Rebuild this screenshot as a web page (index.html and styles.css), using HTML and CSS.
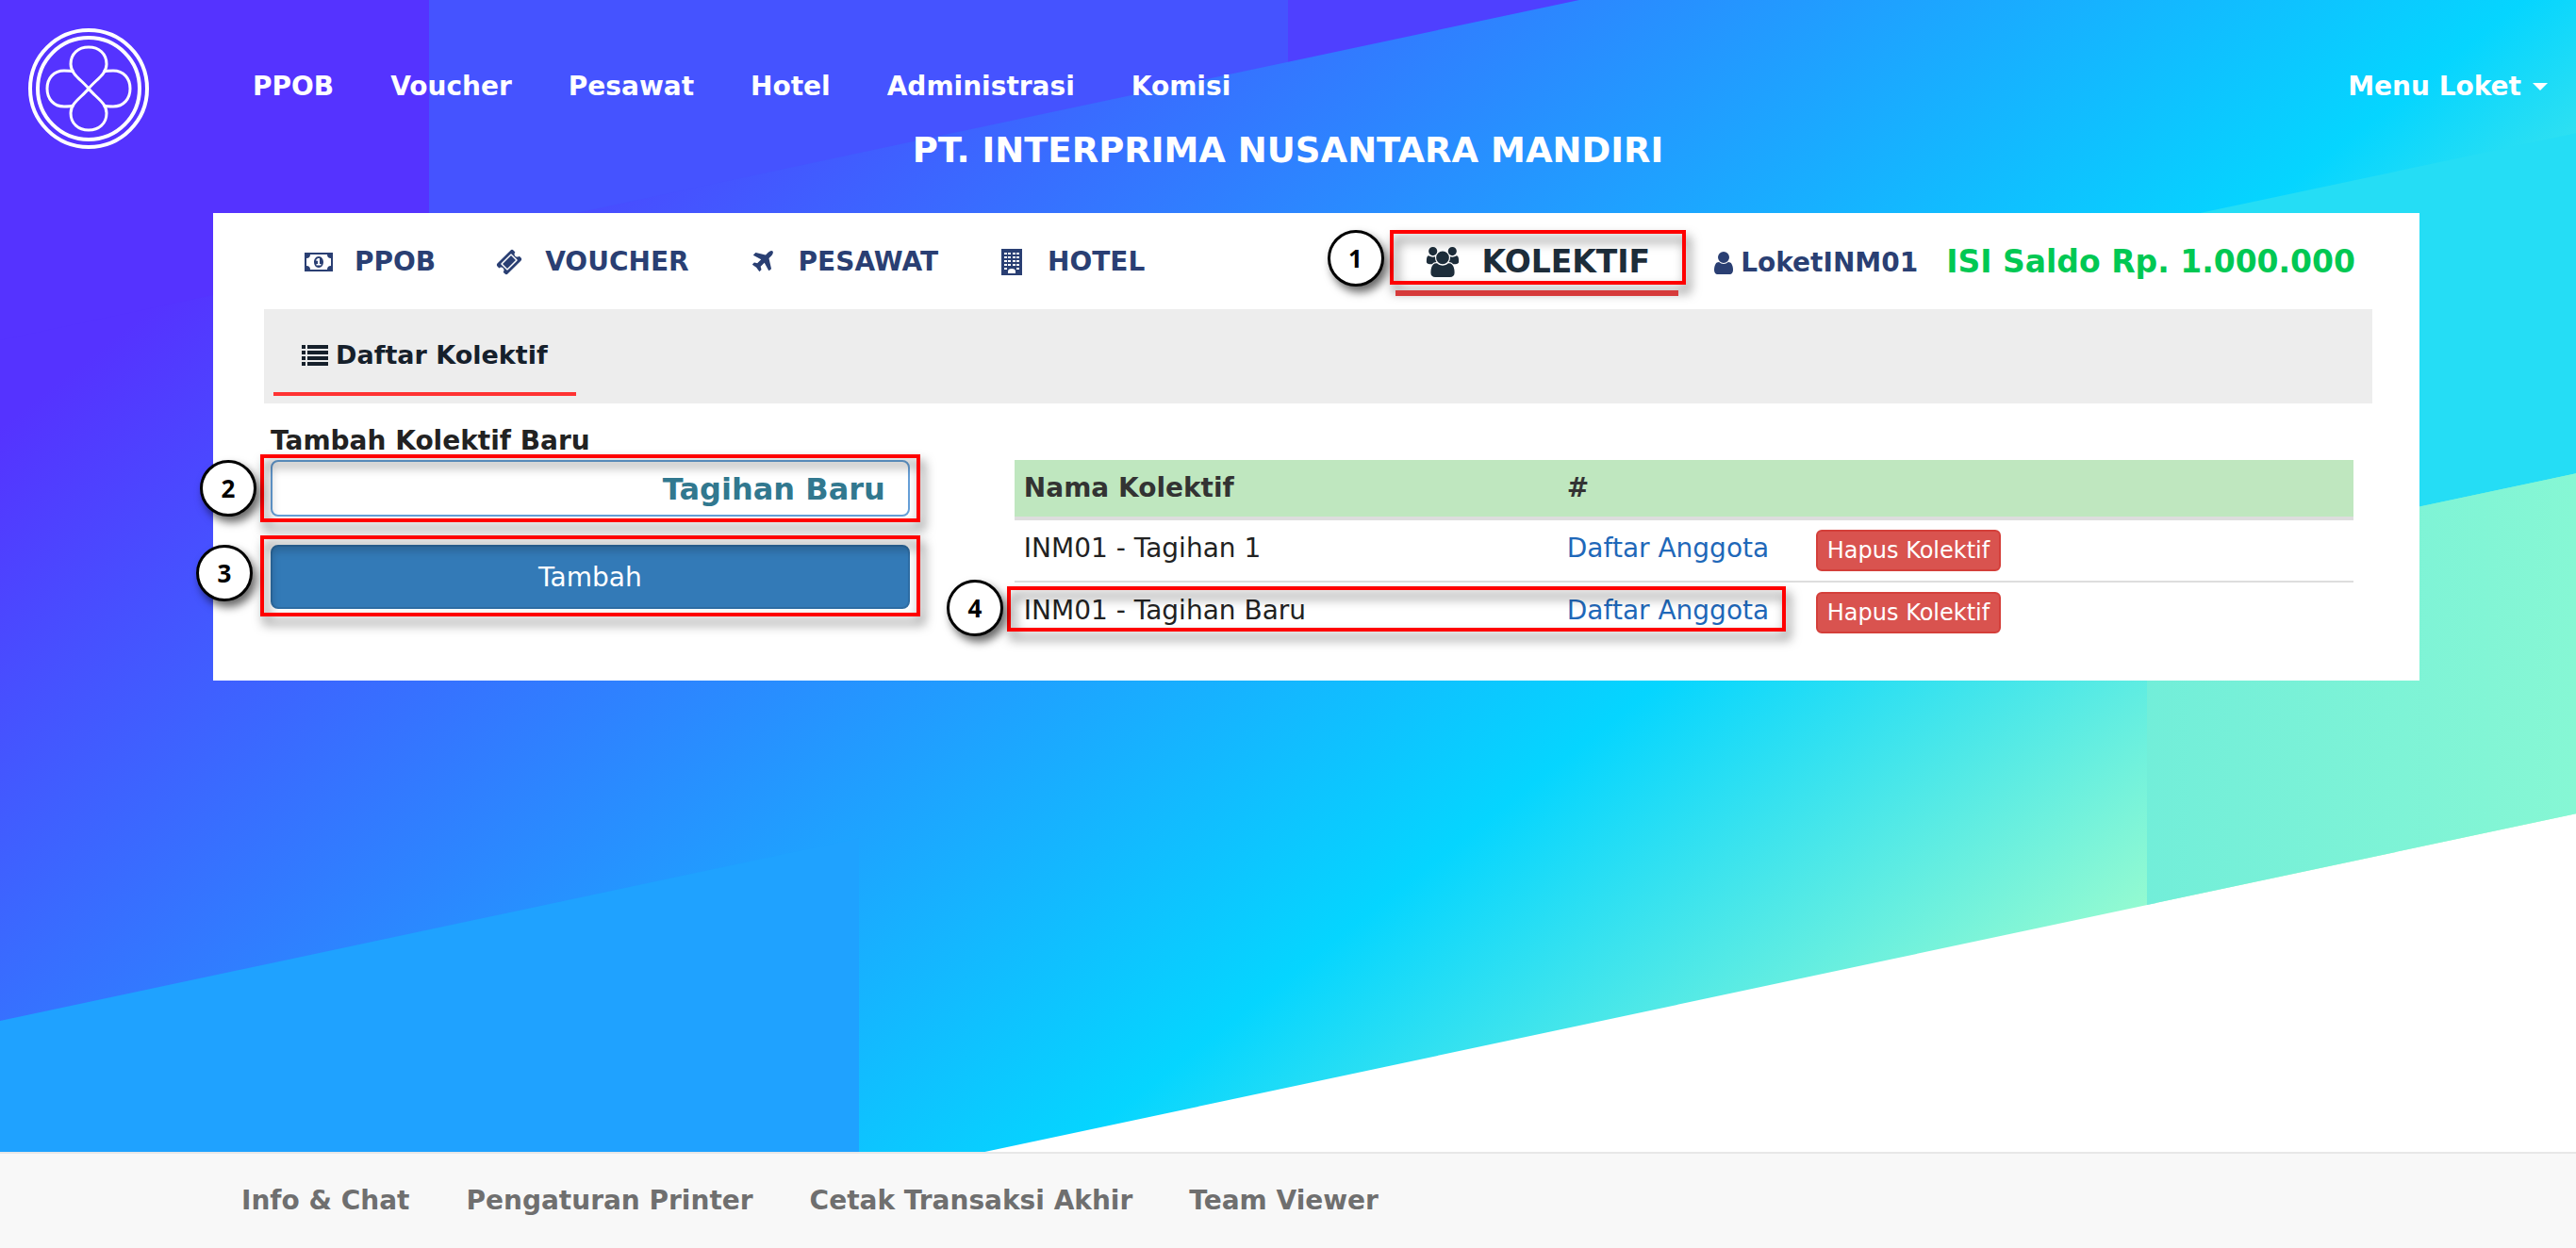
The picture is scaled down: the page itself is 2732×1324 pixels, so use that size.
FILE: index.html
```html
<!DOCTYPE html>
<html lang="id">
<head>
<meta charset="utf-8">
<title>Kolektif - PT. Interprima Nusantara Mandiri</title>
<link rel="stylesheet" href="styles.css">
</head>
<body>
<div class="hero">
  <div class="backdrop" aria-hidden="true">
    <div class="stripes">
      <span class="stripe stripe-violet"></span>
      <span class="stripe stripe-indigo"></span>
      <span class="stripe stripe-purple"></span>
      <span class="stripe stripe-cyan"></span>
      <span class="stripe stripe-blue"></span>
      <span class="stripe stripe-mint"></span>
    </div>
  </div>

  <header class="header">
    <a class="brand" href="#" aria-label="Beranda">
      <svg viewBox="-64 -64 128 128" fill="none" stroke="#fff">
        <circle r="62" stroke-width="4"/>
        <circle r="54" stroke-width="4"/>
        <g stroke-width="3">
          <path d="M0 0C-7-9-19-15-19-26C-19-37-11-44 0-44C11-44 19-37 19-26C19-15 7-9 0 0"/>
          <path d="M0 0C-7-9-19-15-19-26C-19-37-11-44 0-44C11-44 19-37 19-26C19-15 7-9 0 0" transform="rotate(180)"/>
          <path d="M-16-18C-19-19-22-19-26-19C-37-19-44-11-44 0C-44 11-37 19-26 19C-22 19-19 19-16 18"/>
          <path d="M16-18C19-19 22-19 26-19C37-19 44-11 44 0C44 11 37 19 26 19C22 19 19 19 16 18"/>
        </g>
      </svg>
    </a>
    <nav class="main-nav">
      <a href="#">PPOB</a>
      <a href="#">Voucher</a>
      <a href="#">Pesawat</a>
      <a href="#">Hotel</a>
      <a href="#">Administrasi</a>
      <a href="#">Komisi</a>
    </nav>
    <button class="user-menu" type="button">Menu Loket <span class="caret"></span></button>
    <h1 class="company">PT. INTERPRIMA NUSANTARA MANDIRI</h1>
  </header>

  <main class="panel">
    <nav class="tabs">
      <a class="tab" href="#">
        <svg class="icon icon-money" viewBox="0 0 30 20"><path fill-rule="evenodd" d="M0 0H30V20H0ZM6 2A4 4 0 0 1 2 6V14A4 4 0 0 1 6 18H24A4 4 0 0 1 28 14V6A4 4 0 0 1 24 2ZM15 4C18 4 20 7 20 10S18 16 15 16S10 13 10 10S12 4 15 4ZM14 6L12 8L13 9L14 8.500V12H12.500V13.500H17.500V12H16V6Z"/></svg>
        PPOB</a>
      <a class="tab" href="#">
        <svg class="icon" viewBox="0 0 1792 1792"><path d="M1024 452l316 316-572 572-316-316zm-211 979l618-618q19-19 19-45t-19-45l-362-362q-18-18-45-18t-45 18l-618 618q-19 19-19 45t19 45l362 362q18 18 45 18t45-18zm889-637l-907 908q-37 37-90.500 37t-90.500-37l-126-126q56-56 56-136t-56-136-136-56-136 56l-125-126q-37-37-37-90.500t37-90.500l907-906q37-37 90.500-37t90.500 37l125 125q-56 56-56 136t56 136 136 56 136-56l126 125q37 37 37 90.500t-37 90.500z"/></svg>
        VOUCHER</a>
      <a class="tab" href="#">
        <svg class="icon" viewBox="0 0 1792 1792"><path d="M1568 160q44 52 12 148t-108 172l-161 161 160 696q5 19-12 33l-128 96q-7 6-19 6-4 0-7-1-15-3-21-16l-279-508-259 259 53 194q5 17-8 31l-96 96q-9 9-23 9h-2q-15-2-24-13l-189-252-252-189q-11-7-13-23-1-13 9-25l96-97q9-9 23-9 6 0 8 1l194 53 259-259-508-279q-14-8-17-24-2-16 9-27l128-128q14-13 30-8l665 159 160-160q76-76 172-108t148 12z"/></svg>
        PESAWAT</a>
      <a class="tab" href="#">
        <svg class="icon" viewBox="0 0 22 28"><path fill-rule="evenodd" d="M0 0H22V28H0ZM3 4V6H6V4ZM7 4V6H10V4ZM12 4V6H15V4ZM16 4V6H19V4ZM3 8V10H6V8ZM7 8V10H10V8ZM12 8V10H15V8ZM16 8V10H19V8ZM3 12V14H6V12ZM7 12V14H10V12ZM12 12V14H15V12ZM16 12V14H19V12ZM3 16V18H6V16ZM7 16V18H10V16ZM12 16V18H15V16ZM16 16V18H19V16ZM3 20V22H6V20ZM16 20V22H19V20ZM7 26V24A4 3 0 0 1 15 24V26Z"/></svg>
        HOTEL</a>
      <a class="tab tab-active" href="#">
        <svg class="icon icon-group" viewBox="0 0 1920 1792"><path d="M593 896q-162 5-265 128h-134q-82 0-138-40.500t-56-118.500q0-353 124-353 6 0 43.500 21t97.500 42.500 119 21.500q67 0 133-23-5 37-5 66 0 139 81 256zm1071 637q0 120-73 189.500t-194 69.500h-874q-121 0-194-69.500t-73-189.500q0-53 3.500-103.500t14-109 26.500-108.500 43-97.500 62-81 85.500-53.500 111.500-20q10 0 43 21.500t73 48 107 48 135 21.500 135-21.500 107-48 73-48 43-21.500q61 0 111.500 20t85.500 53.500 62 81 43 97.500 26.500 108.500 14 109 3.500 103.500zm-1024-1277q0 106-75 181t-181 75-181-75-75-181 75-181 181-75 181 75 75 181zm704 384q0 159-112.500 271.500t-271.500 112.500-271.500-112.500-112.500-271.500 112.500-271.500 271.500-112.500 271.500 112.500 112.500 271.500zm576 225q0 78-56 118.500t-138 40.500h-134q-103-123-265-128 81-117 81-256 0-29-5-66 66 23 133 23 59 0 119-21.500t97.500-42.500 43.500-21q124 0 124 353zm-128-609q0 106-75 181t-181 75-181-75-75-181 75-181 181-75 181 75 75 181z"/></svg>
        KOLEKTIF
        <span class="frame frame-tab"></span>
        <span class="marker marker-tab">1</span>
      </a>
      <a class="account" href="#">
        <svg class="icon-user" viewBox="256 128 1280 1536"><path d="M1536 1399q0 109-62.500 187t-150.500 78h-854q-88 0-150.500-78t-62.500-187q0-85 8.500-160.500t31.500-152 58.500-131 94-89 134.500-34.500q131 128 313 128t313-128q76 0 134.500 34.500t94 89 58.500 131 31.500 152 8.500 160.500zm-256-887q0 159-112.500 271.500t-271.500 112.500-271.500-112.500-112.500-271.500 112.500-271.500 271.500-112.500 271.500 112.500 112.500 271.500z"/></svg>
        LoketINM01</a>
      <a class="balance" href="#">ISI Saldo Rp. 1.000.000</a>
    </nav>

    <nav class="subnav">
      <a class="subtab" href="#">
        <svg class="icon-list" viewBox="0 0 28 22"><path d="M0 0H4V4H0ZM6 0H28V4H6ZM0 6H4V10H0ZM6 6H28V10H6ZM0 12H4V16H0ZM6 12H28V16H6ZM0 18H4V22H0ZM6 18H28V22H6Z"/></svg>
        Daftar Kolektif</a>
    </nav>

    <div class="content">
      <form class="create">
        <label class="create-label" for="nama">Tambah Kolektif Baru</label>
        <div class="field">
          <input class="create-input" id="nama" type="text" value="Tagihan Baru">
          <span class="frame frame-input"></span>
          <span class="marker marker-input">2</span>
        </div>
        <div class="field">
          <button class="create-button" type="button">Tambah</button>
          <span class="frame frame-button"></span>
          <span class="marker marker-button">3</span>
        </div>
      </form>

      <div class="listing">
        <table class="table">
          <thead>
            <tr><th class="col-name">Nama Kolektif</th><th class="col-members">#</th><th></th></tr>
          </thead>
          <tbody>
            <tr>
              <td>INM01 - Tagihan 1</td>
              <td><a href="#">Daftar Anggota</a></td>
              <td><button class="delete" type="button">Hapus Kolektif</button></td>
            </tr>
            <tr>
              <td>INM01 - Tagihan Baru</td>
              <td><a href="#">Daftar Anggota</a></td>
              <td><button class="delete" type="button">Hapus Kolektif</button></td>
            </tr>
          </tbody>
        </table>
        <span class="frame frame-row"></span>
        <span class="marker marker-row">4</span>
      </div>
    </div>
  </main>
</div>

<footer class="footer">
  <a href="#">Info &amp; Chat</a>
  <a href="#">Pengaturan Printer</a>
  <a href="#">Cetak Transaksi Akhir</a>
  <a href="#">Team Viewer</a>
</footer>
</body>
</html>
```
FILE: styles.css
```css
* { box-sizing: border-box; }

body {
  margin: 0;
  min-height: 100vh;
  display: flex;
  flex-direction: column;
  background: #fff;
  color: #222;
  font-family: Verdana, "DejaVu Sans", sans-serif;
  font-size: 28px;
  line-height: 40px;
}

a { color: inherit; text-decoration: none; }
button, input { font-family: inherit; }

.hero {
  position: relative;
  flex: 1;
}

/* Skewed striped backdrop */
.backdrop {
  position: absolute;
  inset: 0;
  overflow: hidden;
  z-index: -1;
}
.stripes {
  position: absolute;
  inset: 0 0 -222px;
  display: grid;
  grid-template: repeat(4, 1fr) / repeat(6, 1fr);
  transform: skewY(-12deg);
  transform-origin: 0 0;
  background: linear-gradient(150deg, #53f 15%, #05d5ff 70%, #a6ffcb 94%);
}
.stripe-violet { grid-area: 1 / 1 / 2 / 2; background: #53f; }
.stripe-indigo { grid-area: 1 / 2 / 2 / 4; background: #4553ff; }
.stripe-purple { grid-area: 1 / 4 / 2 / 6; background: #4f40ff; }
.stripe-indigo, .stripe-purple { margin-bottom: 5px; }
.stripe-cyan { grid-area: 3 / 5 / 4 / 7; background: #25ddf5; }
.stripe-blue { grid-area: 4 / 1 / 5 / 3; background: #1fa2ff; }
.stripe-mint { grid-area: 4 / 6 / 5 / 7; background: linear-gradient(90deg, #72eed9, #86f7d4); }

/* Header */
.header {
  display: grid;
  grid-template-columns: auto 1fr auto;
  grid-template-rows: 82px auto;
  padding: 30px 30px 0;
  color: #fff;
  font-weight: bold;
}
.brand {
  grid-area: 1 / 1 / 3 / 2;
  width: 128px;
  height: 128px;
}
.brand svg { display: block; }
.main-nav {
  grid-area: 1 / 2;
  align-self: end;
  display: flex;
  gap: 60px;
  padding-left: 110px;
}
.user-menu {
  grid-area: 1 / 3;
  align-self: end;
  display: flex;
  align-items: center;
  gap: 12px;
  padding: 0;
  border: 0;
  background: none;
  color: inherit;
  font-size: 28px;
  font-weight: bold;
  line-height: 40px;
}
.caret {
  border: 8px solid transparent;
  border-top-color: #fff;
  border-bottom: 0;
}
.company {
  grid-area: 2 / 1 / 3 / 4;
  margin: 24px 0 0;
  font-size: 37px;
  line-height: 48px;
  text-align: center;
}

/* Panel */
.panel {
  margin: 42px 166px 40px 226px;
  padding: 0 50px 40px 54px;
  background: #fff;
}
.tabs {
  display: flex;
  align-items: center;
  height: 102px;
  padding: 2px 18px 0 10px;
  color: #2a3f73;
  font-weight: bold;
}
.tab {
  display: flex;
  align-items: center;
  gap: 20px;
  padding: 0 30px;
}
.icon {
  width: 36px;
  height: 28px;
  fill: currentColor;
}
.icon-money { height: 20px; }
.tab-active {
  position: relative;
  gap: 22px;
  margin-left: auto;
  color: #1d2d3a;
  font-size: 33px;
}
.tab-active::after {
  content: "";
  position: absolute;
  left: 0;
  right: 0;
  top: 50px;
  height: 6px;
  background: #d63b3b;
}
.icon-group { width: 40px; height: 32px; }
.account {
  display: flex;
  align-items: center;
  gap: 8px;
  margin: 2px 30px 0 38px;
}
.icon-user { width: 20px; height: 24px; fill: currentColor; }
.balance { color: #00c853; font-size: 33px; }

.subnav {
  display: flex;
  align-items: flex-start;
  height: 100px;
  margin-left: 0;
  padding: 0 10px;
  background: #ededed;
  color: #16202b;
  font-weight: bold;
}
.subtab {
  display: flex;
  align-items: center;
  gap: 8px;
  height: 92px;
  padding: 10px 30px 0;
  border-bottom: 4px solid #f33;
  font-size: 27px;
}
.icon-list { width: 28px; height: 22px; fill: currentColor; }

.content {
  display: grid;
  grid-template-columns: 21fr 44fr;
  gap: 111px;
  padding: 20px 20px 0 7px;
}
.create-label { display: block; font-weight: bold; }
.field { position: relative; }
.create-input {
  display: block;
  width: 100%;
  height: 60px;
  margin-bottom: 30px;
  padding: 2px 24px 0;
  border: 2px solid #66a0d8;
  border-radius: 8px;
  background: #fff;
  color: #31788f;
  font-size: 32px;
  font-weight: bold;
  text-align: right;
}
.create-button {
  display: block;
  width: 100%;
  height: 68px;
  border: 2px solid #2e6da4;
  border-radius: 8px;
  background: #337ab7;
  color: #fff;
  font-size: 28px;
}

.listing { position: relative; margin-top: 40px; }
.table {
  width: 100%;
  table-layout: fixed;
  border-collapse: separate;
  border-spacing: 0;
}
.table th, .table td {
  padding: 10px;
  text-align: left;
  vertical-align: top;
}
.table th {
  background: #bfe7bf;
  border-bottom: 4px solid #ddd;
  color: #333;
}
.table tr + tr td { border-top: 2px solid #ddd; }
.table td a { color: #1f68b9; }
.col-name { width: 576px; }
.col-members { width: 264px; }
.delete {
  display: block;
  height: 44px;
  padding: 0 10px;
  border: 2px solid #d43f3a;
  border-radius: 6px;
  background: #d9534f;
  color: #fff;
  font-size: 24px;
  line-height: 36px;
}

/* Guide annotations */
.frame {
  position: absolute;
  border: 4px solid #f00;
  filter: drop-shadow(4px 8px 6px rgba(0, 0, 0, .6));
  pointer-events: none;
}
.frame-tab { inset: -14px -8px -4px -6px; }
.frame-input { inset: -6px -11px; }
.frame-button { inset: -10px -11px -8px; }
.frame-row { left: -8px; top: 134px; width: 826px; height: 48px; }
.marker {
  position: absolute;
  width: 60px;
  height: 60px;
  border: 3px solid #000;
  border-radius: 50%;
  background: #fff;
  box-shadow: 4px 6px 10px rgba(0, 0, 0, .6);
  color: #000;
  font: bold 26px/54px "Open Sans", sans-serif;
  text-align: center;
}
.marker-tab { left: -72px; top: -14px; }
.marker-input { left: -75px; top: 0; }
.marker-button { left: -79px; top: 0; }
.marker-row { left: -72px; top: 127px; }

/* Footer */
.footer {
  display: flex;
  gap: 60px;
  padding: 30px 256px;
  border-top: 2px solid #e7e7e7;
  background: #f8f8f8;
  color: #6f6f6f;
  font-weight: bold;
}
```
